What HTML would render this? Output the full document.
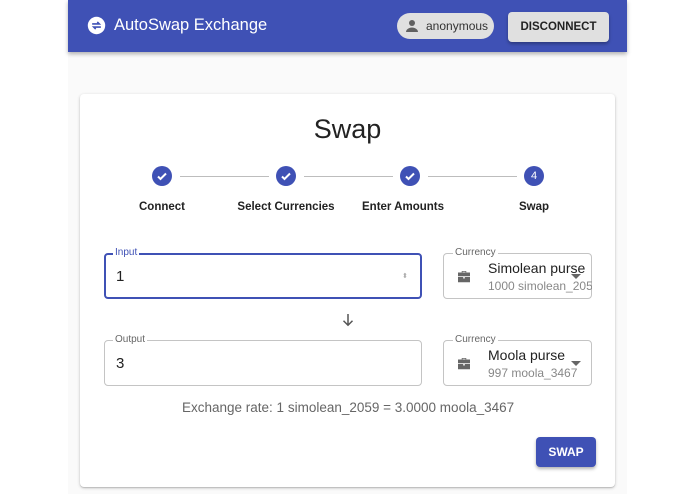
<!DOCTYPE html>
<html><head><style>
*{box-sizing:border-box;margin:0;padding:0}
body{width:695px;height:494px;background:#fff;font-family:"Liberation Sans",sans-serif;position:relative;overflow:hidden}
.a{position:absolute}
.main{left:68px;top:0;width:559px;height:494px;background:#fafafa}
.hdr{left:68px;top:0;width:559px;height:52px;background:#3f51b5;box-shadow:0 2px 4px rgba(0,0,0,.3)}
.card{left:80px;top:94px;width:535px;height:393px;background:#fff;border-radius:4px;box-shadow:0 1px 3px rgba(0,0,0,.2),0 1px 1px rgba(0,0,0,.14)}
.circ{width:20px;height:20px;border-radius:50%;background:#3f51b5;color:#fff;font-size:11px;text-align:center;line-height:20px}
.line{height:1px;background:#bdbdbd}
.lbl{font-size:11.5px;font-weight:bold;color:#222;text-align:center;width:120px}
.fld{border:1px solid #c4c4c4;border-radius:4px;background:#fff}
.leg{font-size:10px;color:#666;background:#fff;padding:0 2px}
</style></head><body>
<div class="a main"></div>
<div class="a hdr"></div>
<svg class="a" style="left:87px;top:16px" width="19" height="19" viewBox="0 0 24 24"><circle cx="12" cy="12" r="11" fill="#fff"/><path d="M6.5 10h9l-2.5-2.5M17.5 14h-9l2.5 2.5" stroke="#3f51b5" stroke-width="2" fill="none"/></svg>
<div class="a" style="left:114px;top:16px;color:#fff;font-size:16.5px">AutoSwap Exchange</div>
<div class="a" style="left:397px;top:13px;width:97px;height:26px;border-radius:13px;background:#e0e0e0"></div>
<svg class="a" style="left:403px;top:17px" width="18" height="18" viewBox="0 0 24 24"><circle cx="12" cy="8" r="4" fill="#616161"/><path d="M4 20c0-4 5-6 8-6s8 2 8 6z" fill="#616161"/></svg>
<div class="a" style="left:426px;top:19px;font-size:12px;color:#333">anonymous</div>
<div class="a" style="left:508px;top:12px;width:101px;height:30px;background:#e0e0e0;border-radius:4px;box-shadow:0 2px 3px rgba(0,0,0,.3);font-size:11.5px;font-weight:bold;color:#222;text-align:center;line-height:30px">DISCONNECT</div>
<div class="a card"></div>
<div class="a" style="left:80px;top:114px;width:535px;text-align:center;font-size:27px;color:#222">Swap</div>
<div class="a line" style="left:180px;top:176px;width:89px"></div>
<div class="a line" style="left:304px;top:176px;width:89px"></div>
<div class="a line" style="left:428px;top:176px;width:89px"></div>
<div class="a circ" style="left:152px;top:166px"><svg width="20" height="20" viewBox="0 0 20 20"><path d="M6 10.5l2.5 2.5 5.5-5.5" stroke="#fff" stroke-width="2" fill="none"/></svg></div>
<div class="a circ" style="left:276px;top:166px"><svg width="20" height="20" viewBox="0 0 20 20"><path d="M6 10.5l2.5 2.5 5.5-5.5" stroke="#fff" stroke-width="2" fill="none"/></svg></div>
<div class="a circ" style="left:400px;top:166px"><svg width="20" height="20" viewBox="0 0 20 20"><path d="M6 10.5l2.5 2.5 5.5-5.5" stroke="#fff" stroke-width="2" fill="none"/></svg></div>
<div class="a circ" style="left:524px;top:166px">4</div>
<div class="a lbl" style="left:102px;top:201px">Connect</div>
<div class="a lbl" style="left:226px;top:201px">Select Currencies</div>
<div class="a lbl" style="left:343px;top:201px">Enter Amounts</div>
<div class="a lbl" style="left:474px;top:201px">Swap</div>

<div class="a fld" style="left:104px;top:253px;width:318px;height:46px;border:2px solid #3f51b5"></div>
<div class="a leg" style="left:113px;top:247px;color:#3f51b5">Input</div>
<div class="a" style="left:116px;top:268px;font-size:15px;color:#222">1</div>
<div class="a" style="left:402px;top:272px;font-size:7px;color:#aaa">⬍</div>

<div class="a fld" style="left:443px;top:253px;width:149px;height:46px"></div>
<div class="a leg" style="left:453px;top:247px">Currency</div>
<svg class="a" style="left:455px;top:268px" width="18" height="18" viewBox="0 0 24 24"><path d="M9 6V4h6v2h5v5H4V6zm1 0h4V5h-4zM4 12h7v2h2v-2h7v7H4z" fill="#666"/></svg>
<div class="a" style="left:488px;top:260px;font-size:14px;color:#222">Simolean purse</div>
<div class="a" style="left:488px;top:279px;font-size:12px;color:#888;width:104px;overflow:hidden;white-space:nowrap">1000 simolean_2059</div>
<div class="a" style="left:571px;top:274px;width:0;height:0;border-left:5px solid transparent;border-right:5px solid transparent;border-top:5px solid #666"></div>

<svg class="a" style="left:339px;top:311px" width="18" height="18" viewBox="0 0 24 24"><path d="M12 4v15M6 13l6 6 6-6" stroke="#555" stroke-width="2" fill="none"/></svg>

<div class="a fld" style="left:104px;top:340px;width:318px;height:46px"></div>
<div class="a leg" style="left:113px;top:334px">Output</div>
<div class="a" style="left:116px;top:355px;font-size:15px;color:#222">3</div>

<div class="a fld" style="left:443px;top:340px;width:149px;height:46px"></div>
<div class="a leg" style="left:453px;top:334px">Currency</div>
<svg class="a" style="left:455px;top:355px" width="18" height="18" viewBox="0 0 24 24"><path d="M9 6V4h6v2h5v5H4V6zm1 0h4V5h-4zM4 12h7v2h2v-2h7v7H4z" fill="#666"/></svg>
<div class="a" style="left:488px;top:347px;font-size:14px;color:#222">Moola purse</div>
<div class="a" style="left:488px;top:366px;font-size:12px;color:#888">997 moola_3467</div>
<div class="a" style="left:571px;top:361px;width:0;height:0;border-left:5px solid transparent;border-right:5px solid transparent;border-top:5px solid #666"></div>

<div class="a" style="left:182px;top:400px;font-size:13.5px;color:#666">Exchange rate: 1 simolean_2059 = 3.0000 moola_3467</div>
<div class="a" style="left:536px;top:437px;width:60px;height:30px;background:#3f51b5;border-radius:4px;box-shadow:0 2px 3px rgba(0,0,0,.3);color:#fff;font-size:12px;font-weight:bold;text-align:center;line-height:30px">SWAP</div>
</body></html>
